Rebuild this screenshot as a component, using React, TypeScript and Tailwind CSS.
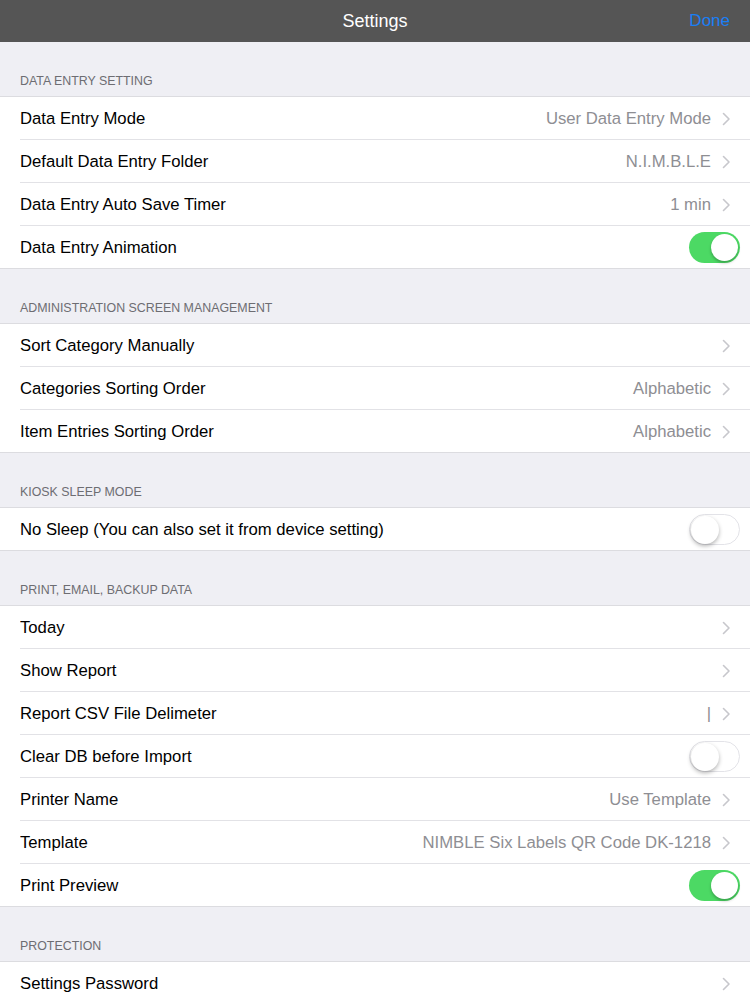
import React from 'react';

type Row = {
  label: string;
  value?: string;
  chevron?: boolean;
  toggle?: boolean;
};

type Section = {
  title: string;
  rows: Row[];
};

const sections: Section[] = [
  {
    title: 'Data Entry Setting',
    rows: [
      { label: 'Data Entry Mode', value: 'User Data Entry Mode', chevron: true },
      { label: 'Default Data Entry Folder', value: 'N.I.M.B.L.E', chevron: true },
      { label: 'Data Entry Auto Save Timer', value: '1 min', chevron: true },
      { label: 'Data Entry Animation', toggle: true },
    ],
  },
  {
    title: 'Administration Screen Management',
    rows: [
      { label: 'Sort Category Manually', chevron: true },
      { label: 'Categories Sorting Order', value: 'Alphabetic', chevron: true },
      { label: 'Item Entries Sorting Order', value: 'Alphabetic', chevron: true },
    ],
  },
  {
    title: 'Kiosk Sleep Mode',
    rows: [{ label: 'No Sleep (You can also set it from device setting)', toggle: false }],
  },
  {
    title: 'Print, Email, Backup Data',
    rows: [
      { label: 'Today', chevron: true },
      { label: 'Show Report', chevron: true },
      { label: 'Report CSV File Delimeter', value: '|', chevron: true },
      { label: 'Clear DB before Import', toggle: false },
      { label: 'Printer Name', value: 'Use Template', chevron: true },
      { label: 'Template', value: 'NIMBLE Six Labels QR Code DK-1218', chevron: true },
      { label: 'Print Preview', toggle: true },
    ],
  },
  {
    title: 'Protection',
    rows: [{ label: 'Settings Password', chevron: true }],
  },
];

const Chevron = () => (
  <svg width="9" height="14" viewBox="0 0 9 14" className="ml-[11px] mr-[9px] shrink-0">
    <path d="M1.5 1.5 L7 7 L1.5 12.5" fill="none" stroke="#c7c7cc" strokeWidth="1.6" strokeLinecap="round" strokeLinejoin="round" />
  </svg>
);

const Toggle = ({ on }: { on: boolean }) =>
  on ? (
    <div className="w-[51px] h-[31px] rounded-full bg-[#4cd964] flex items-center justify-end pr-[2px]">
      <div className="w-[27px] h-[27px] rounded-full bg-white shadow-[0_2px_3px_rgba(0,0,0,0.25)]" />
    </div>
  ) : (
    <div className="w-[51px] h-[31px] rounded-full bg-white border border-[#e3e3e8] flex items-center pl-[1px]">
      <div className="w-[28px] h-[28px] rounded-full bg-white shadow-[0_2px_4px_rgba(0,0,0,0.3)]" />
    </div>
  );

const SettingsRow = ({ row, last }: { row: Row; last: boolean }) => (
  <div className={`h-[43px] pl-5 flex ${last ? 'border-b border-[#dcdce0]' : ''}`}>
    <div className={`flex flex-1 items-center pr-[10px] pt-[1px] ${last ? '' : 'border-b border-[#e2e2e6]'}`}>
      <span className="flex-1 text-[16.7px] text-black truncate">{row.label}</span>
      {row.value && <span className="text-[16.7px] text-[#8e8e93]">{row.value}</span>}
      {row.chevron && <Chevron />}
      {row.toggle !== undefined && <Toggle on={row.toggle} />}
    </div>
  </div>
);

export default function App() {
  return (
    <div className="w-[750px] h-[1000px] overflow-hidden bg-[#efeff4]" style={{ fontFamily: '"Liberation Sans", Arial, sans-serif' }}>
      <div className="h-[42px] bg-[#555555] relative flex items-center justify-center">
        <span className="text-white text-[18px]">Settings</span>
        <span className="absolute right-[20px] text-[#1a7ff5] text-[17px]">Done</span>
      </div>
      {sections.map((section) => (
        <div key={section.title}>
          <div className="h-[55px] flex items-end pl-5 pb-[5px] border-b border-[#dcdce0]">
            <span className="text-[12.4px] uppercase text-[#6d6d72]">{section.title}</span>
          </div>
          <div className="bg-white">
            {section.rows.map((row, i) => (
              <SettingsRow key={row.label} row={row} last={i === section.rows.length - 1} />
            ))}
          </div>
        </div>
      ))}
    </div>
  );
}
